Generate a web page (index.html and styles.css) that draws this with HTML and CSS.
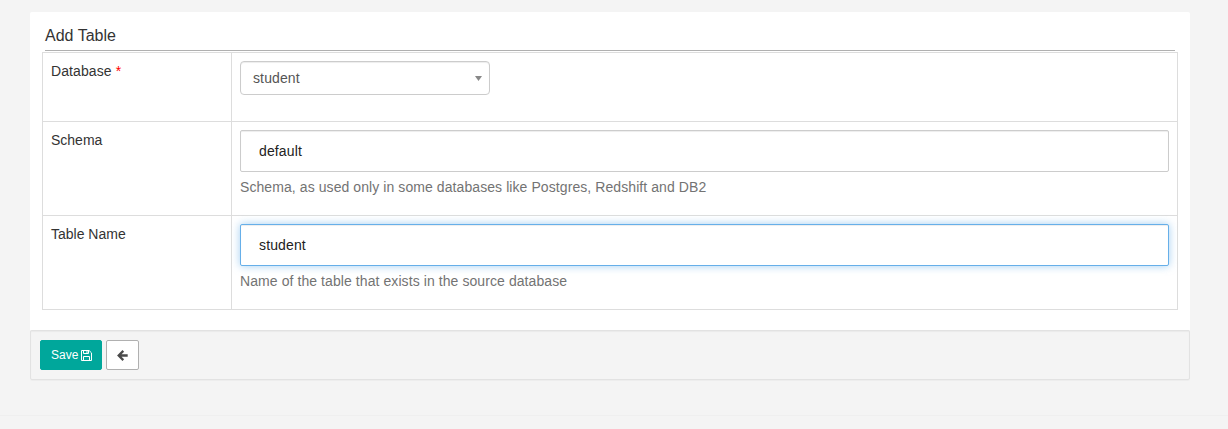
FILE: index.html
```html
<!DOCTYPE html>
<html lang="en">
<head>
<meta charset="utf-8">
<title>Add Table</title>
<link rel="stylesheet" href="styles.css">
</head>
<body>
<main class="content">
  <section class="panel">
    <h1 class="title">Add Table</h1>
    <div class="form">
      <div class="row row-short">
        <div class="label label-required">Database <span class="required">*</span></div>
        <div class="field">
          <div class="select"><span>student</span><svg class="caret" width="7" height="5" viewBox="0 0 7 5"><path d="M0 0h7L3.5 5z" fill="#888"/></svg></div>
        </div>
      </div>
      <div class="row">
        <label class="label" for="schema">Schema</label>
        <div class="field">
          <input class="input" id="schema" type="text" value="default">
          <p class="help">Schema, as used only in some databases like Postgres, Redshift and DB2</p>
        </div>
      </div>
      <div class="row">
        <label class="label" for="table">Table Name</label>
        <div class="field">
          <input class="input input-focus" id="table" type="text" value="student">
          <p class="help">Name of the table that exists in the source database</p>
        </div>
      </div>
    </div>
  </section>
  <div class="actions">
    <button class="btn btn-save" type="button">Save
      <svg width="11" height="11" viewBox="0 0 11 11" fill="none" stroke="#fff"><path d="M.5.5h7.600l2.400 2.400v7.600H.5z"/><path d="M2.500 .5v3h5v-3M2.500 10.500v-4h6v4"/><path d="M5.500 1h1v2h-1z" fill="#fff" stroke="none"/></svg>
    </button>
    <button class="btn btn-back" type="button" aria-label="Back">
      <svg width="11" height="11" viewBox="0 0 11 11" fill="none" stroke="#4a4a4a" stroke-width="2.300"><path d="M6.300 .9L1.700 5.500l4.600 4.600M2 5.500h8.700"/></svg>
    </button>
  </div>
</main>
<footer class="footer"></footer>
</body>
</html>
```
FILE: styles.css
```css
* { box-sizing: border-box; }
body {
  margin: 0;
  height: 429px;
  overflow: hidden;
  display: flex;
  flex-direction: column;
  background: #f4f4f4;
  color: #333;
  font: 14px/20px "Liberation Sans", Arial, sans-serif;
}
.content { padding: 12px 38px 0 30px; }
.panel {
  height: 318px;
  padding: 12px 12px 0;
  background: #fff;
  border-radius: 2px 2px 0 0;
}
.title {
  margin: 0 3px 1px;
  height: 27px;
  border-bottom: 1px solid #b0b0b0;
  font-size: 16px;
  font-weight: 400;
  line-height: 23px;
}
.form { border: 1px solid #ddd; }
.row {
  display: grid;
  grid-template-columns: 189px 1fr;
  height: 94px;
  border-bottom: 1px solid #ddd;
}
.row-short { height: 69px; }
.row:last-child { height: 93px; border-bottom: 0; }
.label { padding: 8px; border-right: 1px solid #ddd; }
.label-required { letter-spacing: .1px; }
.required { color: #f00; }
.field { padding: 8px; }
.select {
  display: flex;
  align-items: center;
  justify-content: space-between;
  width: 250px;
  height: 34px;
  padding: 0 7px 0 12px;
  border: 1px solid #ccc;
  border-radius: 4px;
  box-shadow: inset 0 1px 1px rgba(0, 0, 0, .075);
  color: #555;
  letter-spacing: .12px;
}
.input {
  display: block;
  width: 100%;
  height: 42px;
  padding: 0 18px;
  border: 1px solid #ccc;
  border-radius: 2px;
  box-shadow: inset 0 1px 1px rgba(0, 0, 0, .075);
  background: #fff;
  color: #222;
  font: inherit;
  letter-spacing: .13px;
  outline: 0;
}
.input-focus {
  border-color: #66afe9;
  box-shadow: inset 0 1px 1px rgba(0, 0, 0, .075), 0 0 8px rgba(102, 175, 233, .6);
}
.help { margin: 5px 0 0; color: #737373; letter-spacing: .08px; }
.actions {
  display: flex;
  gap: 4px;
  height: 50px;
  padding: 9px;
  border: 1px solid #e2e2e2;
  border-radius: 2px;
  box-shadow: inset 0 1px 1px rgba(0, 0, 0, .04), 0 1px 1px rgba(0, 0, 0, .03);
}
.btn {
  display: flex;
  align-items: center;
  justify-content: center;
  gap: 3px;
  height: 30px;
  padding: 0;
  border: 1px solid #00a79b;
  border-radius: 2px;
  font: 12px/18px "Liberation Sans", Arial, sans-serif;
}
.btn-save {
  justify-content: flex-start;
  width: 62px;
  padding-left: 10px;
  background: #00a79b;
  color: #fff;
}
.btn-back { width: 33px; border-color: #b0b0b0; background: #fff; }
.footer { margin-top: 35px; border-top: 1px solid #efefef; }
```
